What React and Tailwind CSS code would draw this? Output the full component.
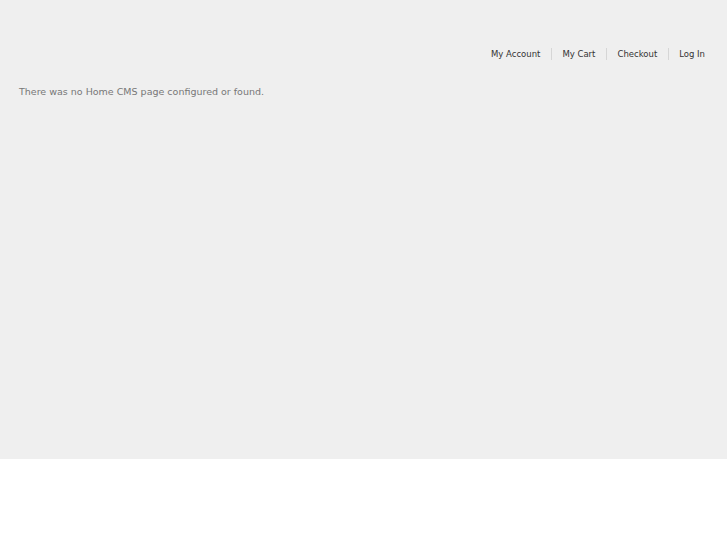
export default function App() {
    const links = ['My Account', 'My Cart', 'Checkout', 'Log In'];

    return (
        <div className="min-h-[545px] bg-white" style={{ fontFamily: '"DejaVu Sans", sans-serif' }}>
            <div className="h-[459px] bg-[#efefef]">
                <header className="flex justify-end pt-[48px] pr-[22px]">
                    <ul className="flex items-center text-[8.5px] leading-[12px] text-[#333]">
                        {links.map((label, i) => (
                            <li key={label} className="flex items-center">
                                {i > 0 ? <span className="mx-[10.5px] h-[12px] w-px bg-[#d6d6d6]" /> : null}
                                <a href="#">{label}</a>
                            </li>
                        ))}
                    </ul>
                </header>
                <main className="mt-[25px] px-[19px]">
                    <p className="text-[9.5px] leading-[14px] text-[#777]">
                        There was no Home CMS page configured or found.
                    </p>
                </main>
            </div>
        </div>
    );
}
